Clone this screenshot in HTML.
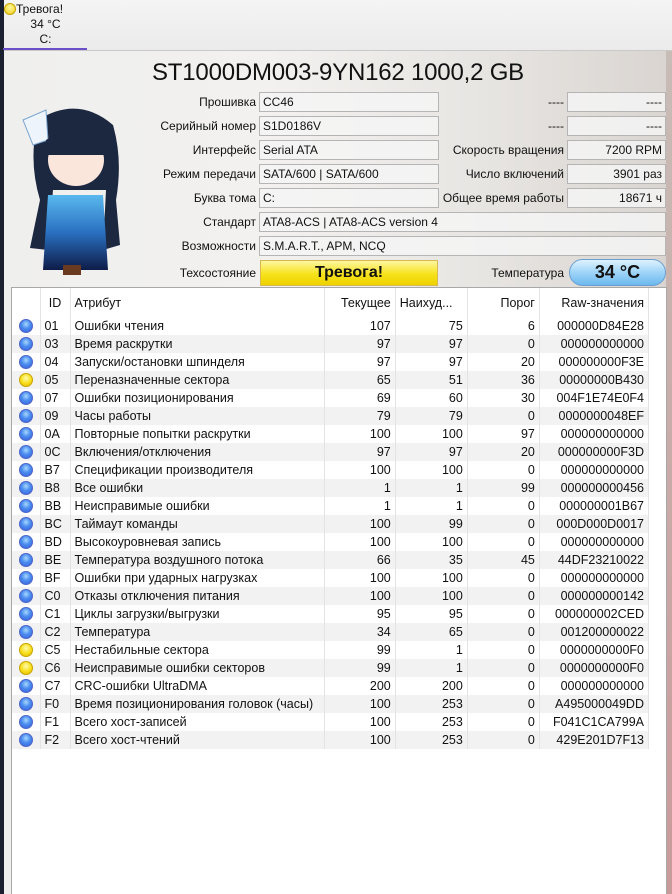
<!DOCTYPE html>
<html><head><meta charset="utf-8"><style>
*{margin:0;padding:0;box-sizing:border-box}
body{width:672px;height:894px;overflow:hidden;position:relative;font-family:Tahoma,"Liberation Sans","DejaVu Sans",sans-serif;font-size:12px;color:#111;background:#e9e6e2}
.abs{position:absolute}
.top{left:0;top:0;width:672px;height:51px;background:linear-gradient(#f4f4f4,#ebebeb);border-bottom:1px solid #c9c9c9}
.tab{left:4px;top:2px;width:83px;height:48px;text-align:center;font-size:12px;line-height:15px}
.bg{left:0;top:51px;width:672px;height:843px;background:linear-gradient(90deg,#efefed 0%,#f2f1ef 40%,#e8e6e3 70%,#d9d4d0 100%)}
.lbl{text-align:right;font-size:12px;line-height:20px}
.fld{height:20px;border:1px solid #b5b5b5;background:rgba(245,245,245,.85);padding:0 3px;line-height:18px;font-size:12px}
.r{text-align:right}
table{border-collapse:collapse;font-size:12.5px}
td{height:18px;padding:0 4px;border-right:1px solid #e3e3e3;white-space:nowrap}
tr:nth-child(even) td{background:#f2f2f2}
.dot{width:14px;height:14px;border-radius:50%;background:radial-gradient(circle at 50% 35%,#a8d8ff 0,#4a8cf0 45%,#3a5fd8 100%);margin:0 auto;border:1px solid #5066c8}
.y{background:radial-gradient(circle at 50% 35%,#fffbb0 0,#f8e020 50%,#e0b800 100%);border-color:#c8a400}
</style></head><body>
<div class="abs bg"></div>
<div class="abs top"></div>
<div class="abs" style="left:0;top:0;width:4px;height:894px;background:#1b2030"></div>
<div class="abs" style="left:666px;top:51px;width:6px;height:843px;background:linear-gradient(#c8bcb6,#c99a9a)"></div>
<div class="abs tab"><div style="text-align:left;padding-left:0"><span style="display:inline-block;width:12px;height:12px;border-radius:50%;background:radial-gradient(circle at 50% 35%,#fff8a0,#f0cc10);border:1px solid #c8a400;vertical-align:-2px"></span>Тревога!</div><div>34 °C</div><div>C:</div></div>
<div class="abs" style="left:3px;top:48px;width:84px;height:2px;background:#6b4fc8"></div>

<svg class="abs" style="left:8px;top:100px" width="120" height="180" viewBox="0 0 120 180">
<path d="M30 20 Q70 -5 105 25 Q115 60 108 100 L112 145 L95 150 L98 90 L45 90 L40 150 L22 148 L32 100 Q20 60 30 20Z" fill="#1c2740"/>
<path d="M15 20 L38 10 L40 40 L25 45Z" fill="#eef4fb" stroke="#7aa4d0"/>
<ellipse cx="68" cy="60" rx="28" ry="26" fill="#fbe6dc"/>
<path d="M38 40 Q68 20 98 40 L96 55 L40 55Z" fill="#1c2740"/>
<path d="M40 95 L95 95 L100 170 L35 170Z" fill="url(#g)"/>
<rect x="55" y="165" width="18" height="10" fill="#6a3a20"/>
<defs><linearGradient id="g" x1="0" y1="0" x2="0" y2="1"><stop offset="0" stop-color="#5ab8ee"/><stop offset=".5" stop-color="#2a70c0"/><stop offset="1" stop-color="#0e1c48"/></linearGradient></defs>
</svg>

<div class="abs" style="left:152px;top:58px;font-size:24px;line-height:30px;white-space:nowrap;letter-spacing:-0.2px">ST1000DM003-9YN162 1000,2 GB</div>

<div class="abs lbl" style="left:100px;top:92px;width:156px">Прошивка</div>
<div class="abs fld" style="left:259px;top:92px;width:180px">CC46</div>
<div class="abs lbl" style="left:100px;top:116px;width:156px">Серийный номер</div>
<div class="abs fld" style="left:259px;top:116px;width:180px">S1D0186V</div>
<div class="abs lbl" style="left:100px;top:140px;width:156px">Интерфейс</div>
<div class="abs fld" style="left:259px;top:140px;width:180px">Serial ATA</div>
<div class="abs lbl" style="left:100px;top:164px;width:156px">Режим передачи</div>
<div class="abs fld" style="left:259px;top:164px;width:180px">SATA/600 | SATA/600</div>
<div class="abs lbl" style="left:100px;top:188px;width:156px">Буква тома</div>
<div class="abs fld" style="left:259px;top:188px;width:180px">C:</div>
<div class="abs lbl" style="left:100px;top:212px;width:156px">Стандарт</div>
<div class="abs fld" style="left:259px;top:212px;width:407px">ATA8-ACS | ATA8-ACS version 4</div>
<div class="abs lbl" style="left:100px;top:236px;width:156px">Возможности</div>
<div class="abs fld" style="left:259px;top:236px;width:407px">S.M.A.R.T., APM, NCQ</div>
<div class="abs lbl" style="left:100px;top:263px;width:156px">Техсостояние</div>
<div class="abs" style="left:260px;top:260px;width:178px;height:26px;background:linear-gradient(#fff6a0,#f6e21a 55%,#eed200);border:1px solid #d8b850;text-align:center;font-weight:bold;font-size:16px;line-height:24px">Тревога!</div>

<div class="abs lbl" style="left:441px;top:92px;width:123px">----</div>
<div class="abs fld r" style="left:567px;top:92px;width:99px">----</div>
<div class="abs lbl" style="left:441px;top:116px;width:123px">----</div>
<div class="abs fld r" style="left:567px;top:116px;width:99px">----</div>
<div class="abs lbl" style="left:441px;top:140px;width:123px">Скорость вращения</div>
<div class="abs fld r" style="left:567px;top:140px;width:99px">7200 RPM</div>
<div class="abs lbl" style="left:441px;top:164px;width:123px">Число включений</div>
<div class="abs fld r" style="left:567px;top:164px;width:99px">3901 раз</div>
<div class="abs lbl" style="left:436px;top:188px;width:128px">Общее время работы</div>
<div class="abs fld r" style="left:567px;top:188px;width:99px">18671 ч</div>
<div class="abs lbl" style="left:441px;top:263px;width:123px">Температура</div>
<div class="abs" style="left:569px;top:259px;width:97px;height:27px;border-radius:14px;background:linear-gradient(#dff2ff,#9fd4f8 50%,#6cb8ee);border:1px solid #6a9ed0;text-align:center;font-weight:bold;font-size:18px;line-height:25px">34 °C</div>

<div class="abs" style="left:11px;top:287px;width:656px;height:607px;background:#fff;border:1px solid #a8a8a8;border-bottom:none">
<table style="width:637px">
<colgroup><col style="width:28px"><col style="width:30px"><col style="width:254px"><col style="width:71px"><col style="width:72px"><col style="width:72px"><col style="width:109px"></colgroup>
<tr><td style="height:29px;background:#fff"></td><td style="text-align:center;background:#fff">ID</td><td style="background:#fff">Атрибут</td><td class="r" style="background:#fff">Текущее</td><td style="background:#fff">Наихуд...</td><td class="r" style="background:#fff">Порог</td><td class="r" style="background:#fff">Raw-значения</td></tr>
</table>
<table style="width:637px">
<colgroup><col style="width:28px"><col style="width:30px"><col style="width:254px"><col style="width:71px"><col style="width:72px"><col style="width:72px"><col style="width:109px"></colgroup>
<tbody>
<tr><td><div class="dot"></div></td><td>01</td><td>Ошибки чтения</td><td class="r">107</td><td class="r">75</td><td class="r">6</td><td class="r">000000D84E28</td></tr>
<tr><td><div class="dot"></div></td><td>03</td><td>Время раскрутки</td><td class="r">97</td><td class="r">97</td><td class="r">0</td><td class="r">000000000000</td></tr>
<tr><td><div class="dot"></div></td><td>04</td><td>Запуски/остановки шпинделя</td><td class="r">97</td><td class="r">97</td><td class="r">20</td><td class="r">000000000F3E</td></tr>
<tr><td><div class="dot y"></div></td><td>05</td><td>Переназначенные сектора</td><td class="r">65</td><td class="r">51</td><td class="r">36</td><td class="r">00000000B430</td></tr>
<tr><td><div class="dot"></div></td><td>07</td><td>Ошибки позиционирования</td><td class="r">69</td><td class="r">60</td><td class="r">30</td><td class="r">004F1E74E0F4</td></tr>
<tr><td><div class="dot"></div></td><td>09</td><td>Часы работы</td><td class="r">79</td><td class="r">79</td><td class="r">0</td><td class="r">0000000048EF</td></tr>
<tr><td><div class="dot"></div></td><td>0A</td><td>Повторные попытки раскрутки</td><td class="r">100</td><td class="r">100</td><td class="r">97</td><td class="r">000000000000</td></tr>
<tr><td><div class="dot"></div></td><td>0C</td><td>Включения/отключения</td><td class="r">97</td><td class="r">97</td><td class="r">20</td><td class="r">000000000F3D</td></tr>
<tr><td><div class="dot"></div></td><td>B7</td><td>Спецификации производителя</td><td class="r">100</td><td class="r">100</td><td class="r">0</td><td class="r">000000000000</td></tr>
<tr><td><div class="dot"></div></td><td>B8</td><td>Все ошибки</td><td class="r">1</td><td class="r">1</td><td class="r">99</td><td class="r">000000000456</td></tr>
<tr><td><div class="dot"></div></td><td>BB</td><td>Неисправимые ошибки</td><td class="r">1</td><td class="r">1</td><td class="r">0</td><td class="r">000000001B67</td></tr>
<tr><td><div class="dot"></div></td><td>BC</td><td>Таймаут команды</td><td class="r">100</td><td class="r">99</td><td class="r">0</td><td class="r">000D000D0017</td></tr>
<tr><td><div class="dot"></div></td><td>BD</td><td>Высокоуровневая запись</td><td class="r">100</td><td class="r">100</td><td class="r">0</td><td class="r">000000000000</td></tr>
<tr><td><div class="dot"></div></td><td>BE</td><td>Температура воздушного потока</td><td class="r">66</td><td class="r">35</td><td class="r">45</td><td class="r">44DF23210022</td></tr>
<tr><td><div class="dot"></div></td><td>BF</td><td>Ошибки при ударных нагрузках</td><td class="r">100</td><td class="r">100</td><td class="r">0</td><td class="r">000000000000</td></tr>
<tr><td><div class="dot"></div></td><td>C0</td><td>Отказы отключения питания</td><td class="r">100</td><td class="r">100</td><td class="r">0</td><td class="r">000000000142</td></tr>
<tr><td><div class="dot"></div></td><td>C1</td><td>Циклы загрузки/выгрузки</td><td class="r">95</td><td class="r">95</td><td class="r">0</td><td class="r">000000002CED</td></tr>
<tr><td><div class="dot"></div></td><td>C2</td><td>Температура</td><td class="r">34</td><td class="r">65</td><td class="r">0</td><td class="r">001200000022</td></tr>
<tr><td><div class="dot y"></div></td><td>C5</td><td>Нестабильные сектора</td><td class="r">99</td><td class="r">1</td><td class="r">0</td><td class="r">0000000000F0</td></tr>
<tr><td><div class="dot y"></div></td><td>C6</td><td>Неисправимые ошибки секторов</td><td class="r">99</td><td class="r">1</td><td class="r">0</td><td class="r">0000000000F0</td></tr>
<tr><td><div class="dot"></div></td><td>C7</td><td>CRC-ошибки UltraDMA</td><td class="r">200</td><td class="r">200</td><td class="r">0</td><td class="r">000000000000</td></tr>
<tr><td><div class="dot"></div></td><td>F0</td><td>Время позиционирования головок (часы)</td><td class="r">100</td><td class="r">253</td><td class="r">0</td><td class="r">A495000049DD</td></tr>
<tr><td><div class="dot"></div></td><td>F1</td><td>Всего хост-записей</td><td class="r">100</td><td class="r">253</td><td class="r">0</td><td class="r">F041C1CA799A</td></tr>
<tr><td><div class="dot"></div></td><td>F2</td><td>Всего хост-чтений</td><td class="r">100</td><td class="r">253</td><td class="r">0</td><td class="r">429E201D7F13</td></tr>
</tbody></table>
</div>
</body></html>
